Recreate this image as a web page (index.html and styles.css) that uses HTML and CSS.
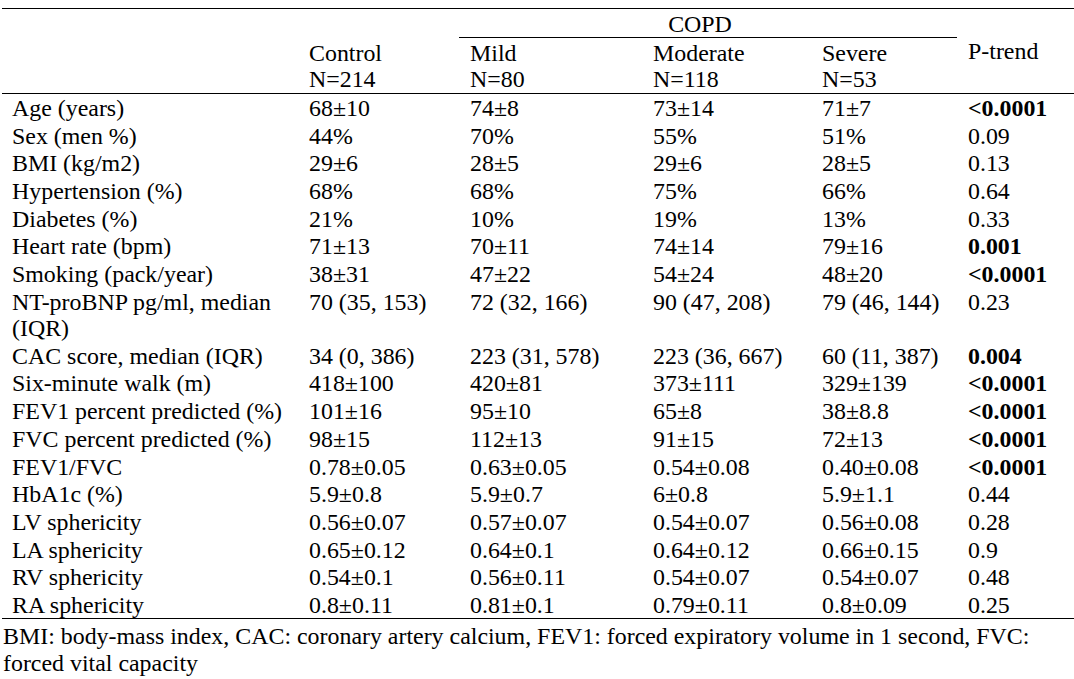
FILE: index.html
```html
<!DOCTYPE html>
<html lang="en">
<head>
<meta charset="utf-8">
<title>COPD table</title>
<link rel="stylesheet" href="styles.css">
</head>
<body>
<div class="page">
<table class="tbl">
<colgroup>
<col class="c-label"><col class="c-control"><col class="c-mild"><col class="c-mod"><col class="c-sev"><col class="c-p">
</colgroup>
<thead>
<tr class="hr1">
<th class="label"></th><th></th>
<th colspan="3" class="copd"><div class="copd-inner">COPD</div></th>
<th rowspan="2" class="ptrend">P-trend</th>
</tr>
<tr class="hr2">
<th class="label"></th>
<th>Control<br>N=214</th>
<th>Mild<br>N=80</th>
<th>Moderate<br>N=118</th>
<th>Severe<br>N=53</th>
</tr>
</thead>
<tbody>
<tr><td class="label">Age (years)</td><td>68±10</td><td>74±8</td><td>73±14</td><td>71±7</td><td class="b">&lt;0.0001</td></tr>
<tr><td class="label">Sex (men %)</td><td>44%</td><td>70%</td><td>55%</td><td>51%</td><td>0.09</td></tr>
<tr><td class="label">BMI (kg/m2)</td><td>29±6</td><td>28±5</td><td>29±6</td><td>28±5</td><td>0.13</td></tr>
<tr><td class="label">Hypertension (%)</td><td>68%</td><td>68%</td><td>75%</td><td>66%</td><td>0.64</td></tr>
<tr><td class="label">Diabetes (%)</td><td>21%</td><td>10%</td><td>19%</td><td>13%</td><td>0.33</td></tr>
<tr><td class="label">Heart rate (bpm)</td><td>71±13</td><td>70±11</td><td>74±14</td><td>79±16</td><td class="b">0.001</td></tr>
<tr><td class="label">Smoking (pack/year)</td><td>38±31</td><td>47±22</td><td>54±24</td><td>48±20</td><td class="b">&lt;0.0001</td></tr>
<tr><td class="label">NT-proBNP pg/ml, median<br>(IQR)</td><td>70 (35, 153)</td><td>72 (32, 166)</td><td>90 (47, 208)</td><td>79 (46, 144)</td><td>0.23</td></tr>
<tr><td class="label">CAC score, median (IQR)</td><td>34 (0, 386)</td><td>223 (31, 578)</td><td>223 (36, 667)</td><td>60 (11, 387)</td><td class="b">0.004</td></tr>
<tr><td class="label">Six-minute walk (m)</td><td>418±100</td><td>420±81</td><td>373±111</td><td>329±139</td><td class="b">&lt;0.0001</td></tr>
<tr><td class="label">FEV1 percent predicted (%)</td><td>101±16</td><td>95±10</td><td>65±8</td><td>38±8.8</td><td class="b">&lt;0.0001</td></tr>
<tr><td class="label">FVC percent predicted (%)</td><td>98±15</td><td>112±13</td><td>91±15</td><td>72±13</td><td class="b">&lt;0.0001</td></tr>
<tr><td class="label">FEV1/FVC</td><td>0.78±0.05</td><td>0.63±0.05</td><td>0.54±0.08</td><td>0.40±0.08</td><td class="b">&lt;0.0001</td></tr>
<tr><td class="label">HbA1c (%)</td><td>5.9±0.8</td><td>5.9±0.7</td><td>6±0.8</td><td>5.9±1.1</td><td>0.44</td></tr>
<tr><td class="label">LV sphericity</td><td>0.56±0.07</td><td>0.57±0.07</td><td>0.54±0.07</td><td>0.56±0.08</td><td>0.28</td></tr>
<tr><td class="label">LA sphericity</td><td>0.65±0.12</td><td>0.64±0.1</td><td>0.64±0.12</td><td>0.66±0.15</td><td>0.9</td></tr>
<tr><td class="label">RV sphericity</td><td>0.54±0.1</td><td>0.56±0.11</td><td>0.54±0.07</td><td>0.54±0.07</td><td>0.48</td></tr>
<tr><td class="label">RA sphericity</td><td>0.8±0.11</td><td>0.81±0.1</td><td>0.79±0.11</td><td>0.8±0.09</td><td>0.25</td></tr>
</tbody>
</table>
<p class="note">BMI: body-mass index, CAC: coronary artery calcium, FEV1: forced expiratory volume in 1 second, FVC:<br>forced vital capacity</p>
</div>
</body>
</html>
```
FILE: styles.css
```css
html, body {
  margin: 0;
  padding: 0;
  background: #fff;
}
.page {
  padding-top: 8px;
  font-family: "Liberation Serif", "Times New Roman", serif;
  font-size: 23.9px;
  line-height: 26.3px;
  color: #000;
}
.tbl {
  margin-left: 2px;
  width: 1072px;
  table-layout: fixed;
  border-collapse: separate;
  border-spacing: 0;
  border-top: 1px solid #000;
  border-bottom: 1px solid #000;
}
.c-label { width: 307px; }
.c-control { width: 161px; }
.c-mild { width: 183px; }
.c-mod { width: 169px; }
.c-sev { width: 146px; }
.c-p { width: 106px; }
.tbl th, .tbl td {
  padding: 0;
  text-align: left;
  font-weight: normal;
  vertical-align: top;
  white-space: nowrap;
}
.tbl .label {
  padding-left: 10px;
}
.hr1 th {
  padding-top: 0;
}
.copd-inner {
  margin-left: -11px;
  margin-right: 11px;
  padding-top: 2px;
  padding-right: 16px;
  text-align: center;
  border-bottom: 1px solid #000;
}
.hr2 th {
  padding-top: 1.7px;
  border-bottom: 1px solid #000;
}
.tbl th.ptrend {
  vertical-align: middle;
  border-bottom: 1px solid #000;
}
.tbl td {
  padding-top: 1.4px;
}
.tbl td.label {
  padding-left: 10px;
}
.tbl td.b {
  font-weight: bold;
}
.note {
  margin: 4px 0 0 3px;
  line-height: 27px;
}
```
